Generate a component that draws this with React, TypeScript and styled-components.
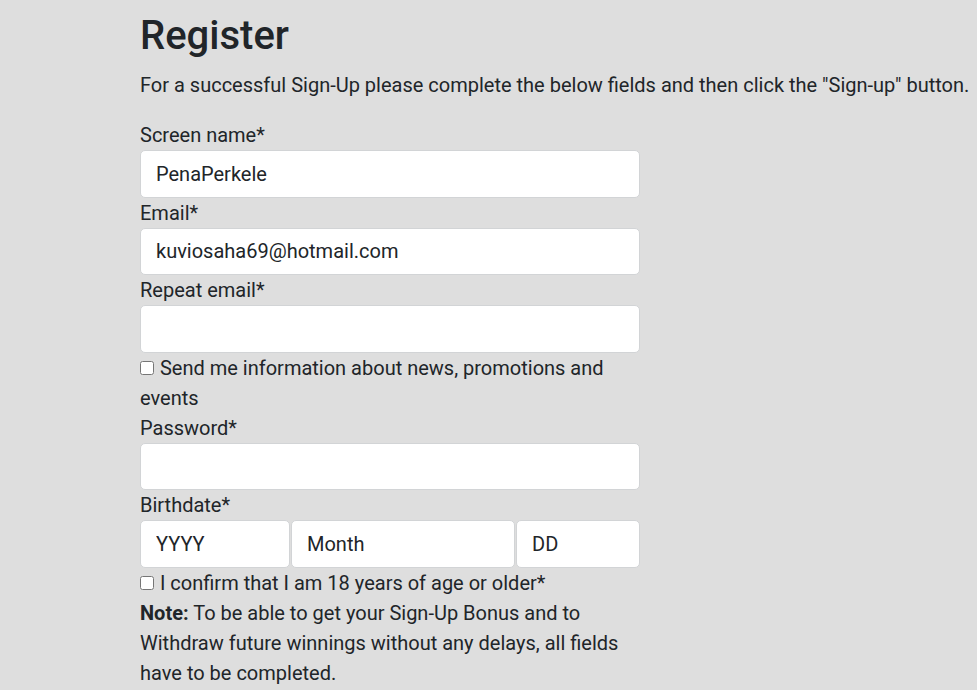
import styled, { createGlobalStyle } from "styled-components";

const GlobalStyle = createGlobalStyle`
  html, body {
    margin: 0;
    padding: 0;
    background: #dedede;
  }

  body {
    font-family: Roboto, "Liberation Sans", Arial, sans-serif;
    font-size: 20px;
    line-height: 30px;
    color: #212529;
  }
`;

type FieldProps = {
  label: string;
  value?: string;
};

function Field({ label, value }: FieldProps) {
  return (
    <FieldWrap>
      <Label>{label}</Label>
      <TextInput type="text" defaultValue={value} />
    </FieldWrap>
  );
}

function App() {
  return (
    <>
      <GlobalStyle />
      <Page>
        <Title>Register</Title>
        <Intro>
          For a successful Sign-Up please complete the below fields and then
          click the "Sign-up" button.
        </Intro>
        <Form>
          <Field label="Screen name*" value="PenaPerkele" />
          <Field label="Email*" value="kuviosaha69@hotmail.com" />
          <Field label="Repeat email*" />
          <CheckLine>
            <Check type="checkbox" /> Send me information about news,
            promotions and events
          </CheckLine>
          <Field label="Password*" />
          <FieldWrap>
            <Label>Birthdate*</Label>
            <DateRow>
              <DateInput type="text" placeholder="YYYY" />
              <DateInput type="text" placeholder="Month" />
              <DateInput type="text" placeholder="DD" />
            </DateRow>
          </FieldWrap>
          <CheckLine>
            <Check type="checkbox" /> I confirm that I am 18 years of age or
            older*
          </CheckLine>
          <Note>
            <strong>Note:</strong> To be able to get your Sign-Up Bonus and to
            Withdraw future winnings without any delays, all fields have to be
            completed.
          </Note>
        </Form>
      </Page>
    </>
  );
}

const Page = styled.div`
  padding: 12px 0 0 140px;
  box-sizing: border-box;
  min-height: 690px;
`;

const Title = styled.h1`
  font-weight: 500;
  font-size: 40px;
  line-height: 48px;
  margin: 0 0 10px;
`;

const Intro = styled.p`
  margin: 0 0 20px;
  white-space: nowrap;
`;

const Form = styled.form`
  width: 500px;
  display: flex;
  flex-direction: column;
`;

const FieldWrap = styled.div`
  display: flex;
  flex-direction: column;
`;

const Label = styled.label`
  display: block;
  height: 30px;
  line-height: 31px;
`;

const TextInput = styled.input`
  display: block;
  width: 100%;
  height: 47.6px;
  box-sizing: border-box;
  padding: 0 15px;
  margin: 0;

  font-family: inherit;
  font-size: 20px;
  color: #212529;

  background: #ffffff;
  border: 1px solid #d2d4d6;
  border-radius: 5px;
  outline: none;

  &::placeholder {
    color: #212529;
    opacity: 1;
  }
`;

const DateRow = styled.div`
  display: grid;
  grid-template-columns: 150px 224px 124px;
  gap: 1px;
`;

const DateInput = styled(TextInput)``;

const CheckLine = styled.label`
  display: block;
  line-height: 30px;
`;

const Check = styled.input`
  width: 14px;
  height: 14px;
  margin: 0 1px 0 0;
  vertical-align: 0;
`;

const Note = styled.p`
  margin: 0;

  & > strong {
    font-weight: 700;
  }
`;

export default App;
